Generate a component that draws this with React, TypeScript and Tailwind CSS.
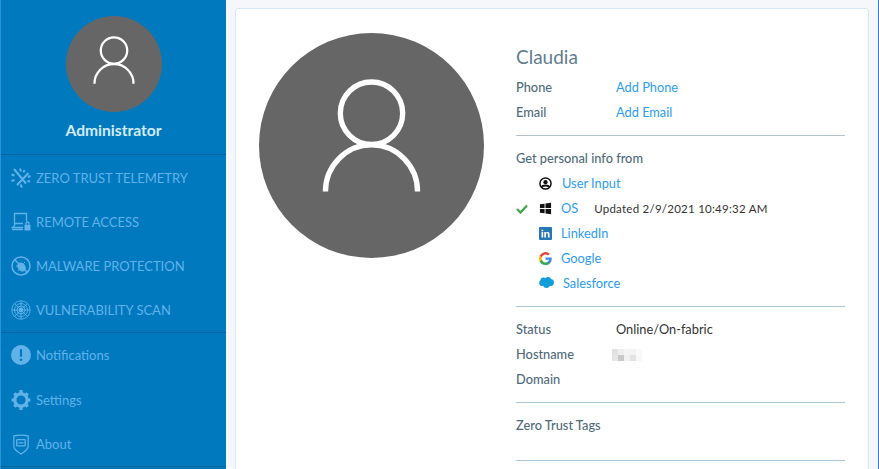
const font = { fontFamily: "Lato, 'Open Sans', sans-serif" };

const UserGlyph = ({ className }: { className: string }) => (
  <svg viewBox="0 0 100 113" className={className} fill="none" stroke="white" strokeWidth="5.400">
    <circle cx="50" cy="34" r="31.500" />
    <path d="M3.500 113 A46.500 47 0 0 1 96.500 113" />
  </svg>
);

const TelemetryIcon = () => (
  <svg viewBox="0 0 20 20" className="w-5 h-5" stroke="#62b2ea" strokeWidth="2" fill="none">
    <path d="M3 1 L15 15.500 M17.500 5 L6 17 M9 0.500 L10 3.500 M0.500 6.500 L3.500 7.500 M19.500 8 L17 9 M0.500 13 L3.500 12 M19 13.500 L16.500 13 M13.500 2 L12.500 4.500 M9.500 16.500 L11 19.500" />
  </svg>
);

const RemoteIcon = () => (
  <svg viewBox="0 0 20 20" className="w-5 h-5" fill="none" stroke="#62b2ea" strokeWidth="1.300">
    <path d="M15.500 9 V1.500 H3.500 V11.500 H12" />
    <path d="M0.500 15.500 H12 M1 17.500 H12" />
    <path d="M4 12 L2.500 15" />
    <rect x="13.500" y="13" width="6" height="5.500" fill="#62b2ea" stroke="none" />
    <path d="M15 13 V11.500 C15 9.500 18 9.500 18 11.500 V13" />
  </svg>
);

const MalwareIcon = () => (
  <svg viewBox="0 0 20 20" className="w-5 h-5" fill="none" stroke="#62b2ea">
    <circle cx="10" cy="10" r="9" strokeWidth="1.500" />
    <ellipse cx="10.500" cy="11" rx="3.800" ry="4.800" fill="#62b2ea" stroke="none" transform="rotate(-35 10.500 11)" />
    <path d="M4 4 L16 16" strokeWidth="1.500" />
    <path d="M5 10 H7 M14 6 L12.500 7.500 M7 15 L8 13.500 M15 12 H13.500" strokeWidth="1" />
  </svg>
);

const ScanIcon = () => (
  <svg viewBox="0 0 20 20" className="w-5 h-5" fill="none" stroke="#62b2ea" strokeWidth="0.900">
    <circle cx="10" cy="10" r="9.200" />
    <circle cx="10" cy="10" r="6.500" />
    <circle cx="10" cy="10" r="4" />
    <circle cx="10" cy="10" r="1.600" fill="#62b2ea" />
    <path d="M10 1 V19 M1 10 H19 M3.600 3.600 L16.400 16.400 M16.400 3.600 L3.600 16.400" />
  </svg>
);

const NoticeIcon = () => (
  <svg viewBox="0 0 20 20" className="w-5 h-5">
    <circle cx="10" cy="10" r="10" fill="#62b2ea" />
    <rect x="8.900" y="4" width="2.200" height="8" rx="1" fill="#0079bf" />
    <circle cx="10" cy="14.800" r="1.300" fill="#0079bf" />
  </svg>
);

const GearIcon = () => (
  <svg viewBox="0 0 20 20" className="w-5 h-5" fill="none" stroke="#62b2ea">
    <circle cx="10" cy="10" r="6.200" strokeWidth="3.200" />
    <path d="M10 0 V3.500 M10 16.500 V20 M0.600 10 H3.500 M16.500 10 H19.400 M3.300 3.300 L5.500 5.500 M14.500 14.500 L16.700 16.700 M16.700 3.300 L14.500 5.500 M5.500 14.500 L3.300 16.700" strokeWidth="3.200" />
  </svg>
);

const AboutIcon = () => (
  <svg viewBox="0 0 20 22" className="w-5 h-[21px]" fill="none" stroke="#62b2ea" strokeWidth="1.300">
    <path d="M2.500 2 C7 1 13 1 17.500 2 V13 C17.500 16 13 19 10 21 C7 19 2.500 16 2.500 13 Z" />
    <rect x="5.500" y="6" width="9" height="6.500" rx="0.800" />
    <path d="M7.500 9.200 H12.500 M5.500 9.200 H6.500 M13.500 9.200 H14.500" />
  </svg>
);

const WindowsIcon = () => (
  <svg viewBox="0 0 14 14" className="w-[13px] h-[13px]" fill="#111">
    <path d="M1 2.500 L6 1.800 V6.500 H1 Z M7 1.600 L13 0.800 V6.500 H7 Z M1 7.500 H6 V12.200 L1 11.500 Z M7 7.500 H13 V13.200 L7 12.400 Z" />
  </svg>
);

const LinkedInIcon = () => (
  <svg viewBox="0 0 13 13" className="w-[13px] h-[13px]">
    <rect width="13" height="13" rx="1" fill="#2877b5" />
    <path d="M2.500 5 H4.200 V10.500 H2.500 Z M2.500 2.700 H4.200 V4.200 H2.500 Z M5.300 5 H6.900 V5.800 C7.800 4.500 10.600 4.500 10.600 7 V10.500 H8.900 V7.400 C8.900 6 7 6 7 7.400 V10.500 H5.300 Z" fill="white" />
  </svg>
);

const GoogleIcon = () => (
  <svg viewBox="0 0 24 24" className="w-[13px] h-[13px]">
    <path fill="#4285F4" d="M23.500 12.300c0-.8-.1-1.600-.2-2.300H12v4.500h6.500a5.500 5.500 0 0 1-2.400 3.600v3h3.800c2.300-2.100 3.600-5.200 3.600-8.800z" />
    <path fill="#34A853" d="M12 24c3.200 0 6-1.100 7.900-2.900l-3.800-3c-1.100.7-2.400 1.200-4.100 1.200-3.100 0-5.800-2.100-6.700-5H1.300v3.100A12 12 0 0 0 12 24z" />
    <path fill="#FBBC05" d="M5.300 14.300a7.200 7.200 0 0 1 0-4.600V6.600h-4a12 12 0 0 0 0 10.800z" />
    <path fill="#EA4335" d="M12 4.800c1.800 0 3.300.6 4.600 1.800l3.400-3.400A12 12 0 0 0 1.300 6.600l4 3.100c.9-2.800 3.600-4.900 6.700-4.900z" />
  </svg>
);

const SalesforceIcon = () => (
  <svg viewBox="0 0 15 11" className="w-[15px] h-[11px] -mt-[2px]" fill="#0f9ddb">
    <circle cx="4.500" cy="3.500" r="3" />
    <circle cx="9" cy="3" r="3" />
    <circle cx="11.500" cy="5.500" r="3.400" />
    <circle cx="3.200" cy="6" r="3" />
    <circle cx="7.500" cy="7.500" r="3.400" />
  </svg>
);

const UserInputIcon = () => (
  <svg viewBox="0 0 14 14" className="w-[13px] h-[13px]" fill="none" stroke="#111">
    <circle cx="7" cy="7" r="6" strokeWidth="1.600" />
    <circle cx="7" cy="5.600" r="2.300" fill="#111" stroke="none" />
    <path d="M3 11 C4 8.500 10 8.500 11 11" strokeWidth="2" />
  </svg>
);

const topNav = [
  { label: "ZERO TRUST TELEMETRY", icon: <TelemetryIcon /> },
  { label: "REMOTE ACCESS", icon: <RemoteIcon /> },
  { label: "MALWARE PROTECTION", icon: <MalwareIcon /> },
  { label: "VULNERABILITY SCAN", icon: <ScanIcon /> },
];

const bottomNav = [
  { label: "Notifications", icon: <NoticeIcon /> },
  { label: "Settings", icon: <GearIcon /> },
  { label: "About", icon: <AboutIcon /> },
];

const sources = [
  { label: "User Input", icon: <UserInputIcon />, gap: "ml-[8px]" },
  { label: "OS", icon: <WindowsIcon />, gap: "ml-[7px]", checked: true, note: "Updated 2/9/2021 10:49:32 AM" },
  { label: "LinkedIn", icon: <LinkedInIcon />, gap: "ml-[7px]" },
  { label: "Google", icon: <GoogleIcon />, gap: "ml-[7px]" },
  { label: "Salesforce", icon: <SalesforceIcon />, gap: "ml-[9px]" },
];

const blurCells = ["bg-[#e2e2e2]", "bg-[#eeeeee]", "bg-[#f4f4f4]", "bg-[#f2f2f2]", "bg-[#f9f9f9]", "bg-[#e6e6e6]", "bg-[#c9c9c9]", "bg-[#f1f1f1]", "bg-[#e3e3e3]", "bg-[#f7f7f7]"];

const NavRow = ({ label, icon }: { label: string; icon: React.ReactNode }) => (
  <div className="h-[44px] first:h-[45px] flex items-center pl-[10px] gap-[5px] text-[13px] text-[#62b2ea]">
    {icon}
    <span className="pt-[2px]">{label}</span>
  </div>
);

const Field = ({ label, children }: { label: string; children?: React.ReactNode }) => (
  <div className="h-[25px] flex items-center text-[12.800px]">
    <span className="w-[100px] font-medium text-[#4f6b7b]">{label}</span>
    {children}
  </div>
);

export default function App() {
  return (
    <div style={font} className="w-[879px] h-[469px] flex overflow-hidden bg-[#f6f7fb] border-r border-[#2a80c6]">
      <aside className="w-[226px] h-full shrink-0 bg-[#0079bf] border-l border-[#2c93d6] flex flex-col">
        <div className="h-[155px] shrink-0 pt-4 flex flex-col items-center border-b border-[#00659f]">
          <div className="w-[96px] h-[96px] rounded-full bg-[#666666] flex items-center justify-center">
            <UserGlyph className="w-[42px] h-[48px] -mt-[8px]" />
          </div>
          <p className="mt-[8px] text-[15.600px] font-bold leading-5 text-[#d3ecfb]">Administrator</p>
        </div>
        <nav className="h-[178px] shrink-0 border-b border-[#00659f]">
          {topNav.map(n => <NavRow key={n.label} {...n} />)}
        </nav>
        <nav className="h-[134px] shrink-0 border-b border-[#00659f] [&>div:first-child]:pb-[1px]">
          {bottomNav.map(n => <NavRow key={n.label} {...n} />)}
        </nav>
      </aside>

      <main className="flex-1 pl-[9px] pr-[9px] pt-2">
        <section className="h-[480px] bg-white border border-[#d6e8f5] rounded-[3px] flex">
          <div className="w-[280px] shrink-0 pl-[23px] pt-6">
            <div className="w-[225px] h-[225px] rounded-full bg-[#666666] flex items-center justify-center">
              <UserGlyph className="w-[99px] h-[113px] -mt-[20px]" />
            </div>
          </div>
          <div className="w-[329px] pt-[34px]">
            <h1 className="text-[19px] leading-[28px] text-[#5f7d8e]">Claudia</h1>
            <div className="mt-[4px] pb-[10px] border-b border-[#b3c3cc]">
              <Field label="Phone"><span className="text-[#2d9cf2]">Add Phone</span></Field>
              <Field label="Email"><span className="text-[#2d9cf2]">Add Email</span></Field>
            </div>
            <div className="pt-[10px] pb-[10px] border-b border-[#a9c7d9]">
              <p className="h-[25px] flex items-center text-[12.800px] font-medium text-[#4f6b7b]">Get personal info from</p>
              {sources.map(s => (
                <div key={s.label} className="h-[25px] flex items-center text-[12.800px]">
                  <span className="w-[23px] shrink-0">
                    {s.checked && (
                      <svg viewBox="0 0 12 10" className="w-3 h-[10px]" fill="none" stroke="#46a84d" strokeWidth="2.400">
                        <path d="M1 5 L4.500 8.500 L11 1.500" />
                      </svg>
                    )}
                  </span>
                  <span className="w-[15px] flex justify-start">{s.icon}</span>
                  <span className={`${s.gap} text-[#2d9cf2]`}>{s.label}</span>
                  {s.note && <span className="ml-[16px] text-[11.500px] text-[#333333] tracking-[0.250px]">{s.note}</span>}
                </div>
              ))}
            </div>
            <div className="pt-[10px] pb-[10px] border-b border-[#a9c7d9]">
              <Field label="Status"><span className="text-[#333333]">Online/On-fabric</span></Field>
              <Field label="Hostname">
                <span className="-ml-1 w-[30px] h-[12px] grid grid-cols-5 grid-rows-2">
                  {blurCells.map((c, i) => <span key={i} className={c} />)}
                </span>
              </Field>
              <Field label="Domain" />
            </div>
            <div className="pt-[10px] h-[58px] border-b border-[#a9c7d9]">
              <p className="h-[25px] flex items-center text-[12.800px] font-medium text-[#4f6b7b]">Zero Trust Tags</p>
            </div>
          </div>
        </section>
      </main>
    </div>
  );
}
